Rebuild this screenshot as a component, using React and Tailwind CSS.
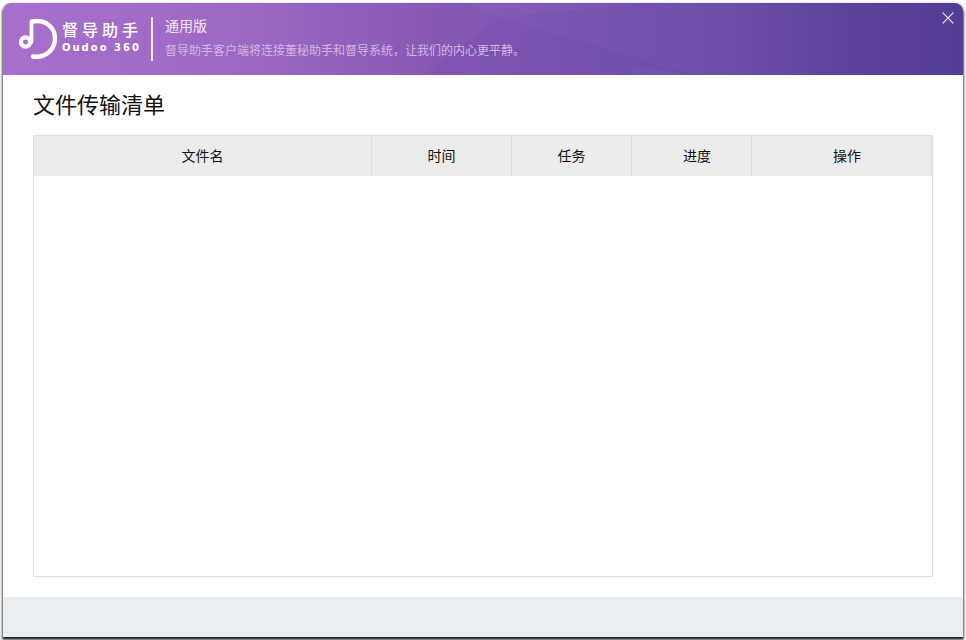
export default function App() {
  const cols = [
    { t: "文件名", w: "w-[338px]", p: "" },
    { t: "时间", w: "w-[140px]", p: "" },
    { t: "任务", w: "w-[120px]", p: "" },
    { t: "进度", w: "w-[120px]", p: "pl-[11px]" },
    { t: "操作", w: "flex-1", p: "pl-[11px]" },
  ];
  const font = { fontFamily: '"Noto Sans CJK SC", "Liberation Sans", sans-serif' };
  return (
    <div className="w-[966px] h-[640px] bg-white p-[3px] overflow-hidden" style={font}>
      <div className="w-[960px] h-[634px] flex flex-col bg-white rounded-t-[8px] shadow-[0_2px_2px_0_rgba(0,0,0,0.75),0_2px_3px_1px_rgba(0,0,0,0.5)]">
        <header className="relative h-[72px] shrink-0 rounded-t-[8px] overflow-hidden flex items-center bg-[linear-gradient(90deg,#a86fcd_0%,#9d69c4_25%,#8758b5_45%,#7252ae_65%,#6d4fa9_75%,#5f429c_88%,#553d96_100%)]">
          <svg className="absolute inset-0" width="960" height="72" viewBox="0 0 960 72" fill="none">
            <polygon points="462,0 640,0 497,14" fill="#ffffff" fillOpacity="0.03" />
            <polygon points="497,14 690,72 420,72" fill="#3f3a9a" fillOpacity="0.06" />
            <polygon points="625,62 690,72 630,72" fill="#ffffff" fillOpacity="0.025" />
          </svg>
          <svg className="relative ml-[14px] shrink-0" width="42" height="44" viewBox="0 0 42 44" fill="none">
            <path d="M15 4.5 C 28 2, 38 10, 38 21.5 C 38 33, 28 41.5, 16 39.5" stroke="#fff" strokeWidth="4.4" strokeLinecap="round" />
            <path d="M14.5 5 V 25" stroke="#fff" strokeWidth="3.8" strokeLinecap="round" />
            <circle cx="8.5" cy="25" r="4.6" stroke="#fff" strokeWidth="4.2" />
          </svg>
          <div className="relative ml-[3px] w-[81px] text-white -mt-[6px]">
            <div className="text-[16px] leading-[20px] font-medium tracking-[4px] whitespace-nowrap">督导助手</div>
            <div className="text-[10px] leading-[12px] font-black tracking-[2px] whitespace-nowrap mt-[3px]" style={{ fontFamily: '"DejaVu Sans", sans-serif' }}>Oudoo 360</div>
          </div>
          <div className="relative ml-[8px] w-[2px] h-[44px] bg-[#f1e6f6]" />
          <div className="relative ml-[12px] flex flex-col -mt-[4px]">
            <div className="text-[14px] leading-[20px] -mt-[1px] text-[#f3e8f7]">通用版</div>
            <div className="text-[12px] leading-[16px] mt-[7px] text-[#d2b8e2] whitespace-nowrap">督导助手客户端将连接董秘助手和督导系统，让我们的内心更平静。</div>
          </div>
          <svg className="absolute right-[9px] top-[9px]" width="12" height="12" viewBox="0 0 12 12" fill="none">
            <path d="M0.7 0.7 L11.3 11.3 M11.3 0.7 L0.7 11.3" stroke="#f4eefa" strokeWidth="1.1" />
          </svg>
        </header>
        <main className="flex-1 flex flex-col px-[30px] min-h-0">
          <h1 className="text-[22px] leading-[30px] mt-[13px] text-[#111]">文件传输清单</h1>
          <div className="mt-[17px] h-[442px] border border-[#dedede] flex flex-col">
            <div className="h-[40px] flex bg-[#ececec]">
              {cols.map((c) => (
                <div key={c.t} className={`${c.w} ${c.p} flex items-center justify-center border-r border-[#e0e0e0] text-[14px] leading-[20px] pb-[2px] text-[#111]`}>
                  {c.t}
                </div>
              ))}
            </div>
          </div>
        </main>
        <footer className="h-[40px] shrink-0 bg-[#e9eef2]" />
      </div>
    </div>
  );
}
